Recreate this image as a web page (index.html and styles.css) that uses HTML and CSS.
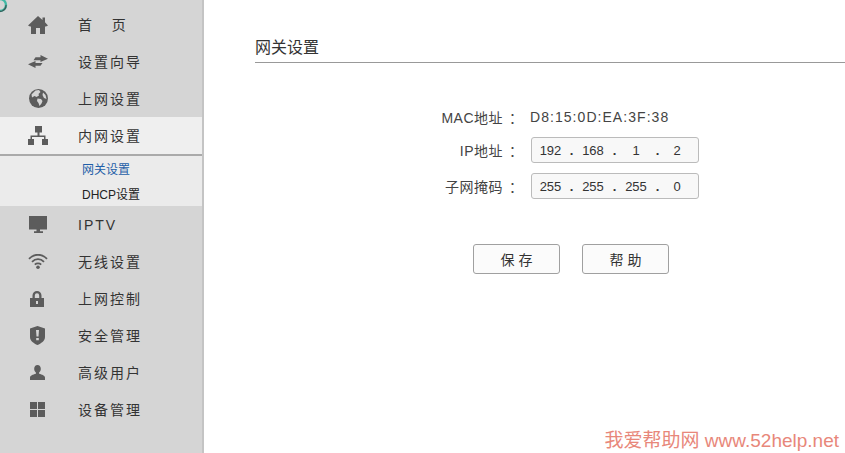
FILE: index.html
```html
<!DOCTYPE html>
<html lang="zh">
<head>
<meta charset="utf-8">
<title>网关设置</title>
<link rel="stylesheet" href="styles.css">
</head>
<body>
<div class="page">
  <nav class="side">
    <svg class="ring" viewBox="0 0 10 16" width="10" height="16"><circle cx="0" cy="5" r="6" fill="none" stroke="#3fb9a4" stroke-width="2.4"/><path d="M-3 10.5A6 6 0 0 0 6 5" fill="none" stroke="#3c5a58" stroke-width="1.2"/></svg>
    <a class="item"><span class="ic"><svg viewBox="0 0 20 18" width="20" height="18"><path fill="#5c5c5c" d="M10 0 14.500 4V1.500H17V6.300L20 9.500 18 10.500H17V18H12V12H8V18H3V10.500H2L0 9.500Z"/></svg></span><span class="lb sp">首&nbsp;&nbsp;&nbsp;页</span></a>
    <a class="item"><span class="ic"><svg viewBox="0 0 20 13" width="20" height="13"><path fill="#5c5c5c" d="M12.500 0 20 3.700 12.500 7V5.200H5.500L7.500 2.200H12.500ZM7.500 6V8H14.500L12.500 10.800H7.500V13L0 9.300Z"/></svg></span><span class="lb">设置向导</span></a>
    <a class="item"><span class="ic"><svg viewBox="0 0 19 19" width="19" height="19"><circle cx="9.500" cy="9.500" r="9.500" fill="#5c5c5c"/><path fill="#d5d5d5" d="M6.500 1.500 10 1 11.500 3 9.500 5 10 6.500 7.500 8 5.500 7 3 8.500 2.500 5.500ZM8.500 9.500l3.500.5 1.500 2-1 2.500-2 2.500-1-3-1.500-2ZM14 3.500l2.500 2.500 1 4-2.500-1-1.500-3Z"/></svg></span><span class="lb">上网设置</span></a>
    <a class="item on"><span class="ic"><svg viewBox="0 0 20 19" width="20" height="19"><path fill="#5c5c5c" d="M7 0h7v6.500h-2.500V9.500H17.500V13H20v6H14v-6h2V11H4v2h2v6H0v-6h2.500V9.500H9.500V6.500H7Z"/></svg></span><span class="lb">内网设置</span></a>
    <div class="sub">
      <a class="sub-item cur">网关设置</a>
      <a class="sub-item">DHCP设置</a>
    </div>
    <a class="item"><span class="ic"><svg viewBox="0 0 18 17" width="18" height="17"><path fill="#5c5c5c" d="M0 0h18v13.500H11v1.800h3V17H5v-1.700h2.500v-1.800H0Z"/></svg></span><span class="lb">IPTV</span></a>
    <a class="item"><span class="ic"><svg viewBox="0 0 20 15" width="20" height="15"><g fill="none" stroke="#5c5c5c" stroke-width="1.800"><path d="M1 4.800C6 -.6 14 -.6 19 4.800"/><path d="M4 7.800C7.500 4.200 12.500 4.200 16 7.800"/><path d="M6.800 10.600C8.500 9 11.500 9 13.200 10.600"/></g><circle cx="10" cy="13.200" r="1.800" fill="#5c5c5c"/></svg></span><span class="lb">无线设置</span></a>
    <a class="item"><span class="ic"><svg viewBox="0 0 16 16" width="16" height="16"><path fill="#5c5c5c" fill-rule="evenodd" d="M2.500 7V4.500a4.500 4.500 0 0 1 9 0V7H14v9H0V7ZM4.800 7h4.400V4.500a2.200 2.200 0 0 0-4.400 0ZM6 10v3h2v-3Z"/></svg></span><span class="lb">上网控制</span></a>
    <a class="item"><span class="ic"><svg viewBox="0 0 16 19" width="16" height="19"><path fill="#5c5c5c" fill-rule="evenodd" d="M7.500 0 15 2.500V11c0 4-4 6.500-7.500 8C4 17.500 0 15 0 11V2.500ZM6 4l.500 6.500h2L9 4ZM6.200 12v2.300h2.600V12Z"/></svg></span><span class="lb">安全管理</span></a>
    <a class="item"><span class="ic"><svg viewBox="0 0 16 15" width="16" height="15"><path fill="#5c5c5c" d="M7.500 0c2 0 3.300 1.600 3.300 3.800 0 1.600-.7 3-1.700 3.800v1.200c3 .8 5.900 1.800 5.900 3.700V15H0v-2.500c0-1.900 2.900-2.900 5.900-3.700V7.600c-1-.8-1.700-2.200-1.700-3.800C4.200 1.600 5.500 0 7.500 0Z"/></svg></span><span class="lb">高级用户</span></a>
    <a class="item"><span class="ic"><svg viewBox="0 0 16 15" width="16" height="15"><path fill="#5c5c5c" d="M0 0h7v7H0ZM8 0h7v7H8ZM0 8h7v7H0ZM8 8h7v7H8Z"/></svg></span><span class="lb">设备管理</span></a>
  </nav>
  <main class="main">
    <h1 class="title">网关设置</h1>
    <div class="form">
      <div class="row">
        <span class="key">MAC地址<span class="colon">：</span></span>
        <span class="val">D8:15:0D:EA:3F:38</span>
      </div>
      <div class="row">
        <span class="key">IP地址<span class="colon">：</span></span>
        <div class="ip"><span>192</span><i>.</i><span>168</span><i>.</i><span>1</span><i>.</i><span>2</span></div>
      </div>
      <div class="row">
        <span class="key">子网掩码<span class="colon">：</span></span>
        <div class="ip"><span>255</span><i>.</i><span>255</span><i>.</i><span>255</span><i>.</i><span>0</span></div>
      </div>
    </div>
    <div class="btns">
      <button class="btn">保 存</button>
      <button class="btn">帮 助</button>
    </div>
  </main>
</div>
<div class="mark">我爱帮助网 www.52help.net</div>
</body>
</html>
```
FILE: styles.css
```css
* { box-sizing: border-box; }
html, body { margin: 0; height: 100%; overflow: hidden; background: #fff; }
body { font-family: "Liberation Sans", "Noto Sans CJK SC", sans-serif; color: #333; position: relative; }
.page { display: flex; height: 453px; }
.side { width: 204px; flex: none; background: #d5d5d5; border-right: 2px solid #c4c4c4; padding-top: 6px; position: relative; }
.ring { position: absolute; left: 0; top: 0; }
.item { display: flex; align-items: center; height: 37px; }
.item.on { background: #efefef; }
.ic { width: 76px; display: flex; justify-content: center; flex: none; }
.lb { margin-left: 2px; font-size: 14px; letter-spacing: 2px; color: #333; line-height: 1; }
.sub { background: #ebebeb; border-top: 2px solid #aaa; height: 52px; padding-top: 2px; display: flex; flex-direction: column; gap: 1px; }
.sub-item { height: 24px; line-height: 25px; padding-left: 82px; font-size: 12px; color: #222; }
.sub-item.cur { color: #1f5fa8; }
.main { flex: 1; padding-left: 51px; min-width: 0; }
.title { margin: 39px 0 0; height: 24px; font-size: 16px; line-height: 18px; font-weight: 400; color: #333; border-bottom: 1px solid #999; }
.form { margin-top: 39px; display: flex; flex-direction: column; }
.row { display: grid; grid-template-columns: 268px 168px; column-gap: 8px; align-items: center; height: 36px; }
.row:first-child { height: 30px; }
.key { text-align: right; font-size: 14px; letter-spacing: .5px; color: #444; }
.colon { display: inline-block; width: 14px; margin-left: 6px; letter-spacing: 0; text-align: left; }
.val { font-size: 14px; letter-spacing: 1.05px; color: #444; margin-left: -1px; }
.ip { height: 26px; width: 168px; border: 1px solid #bbb; border-radius: 3px; background: #f8f8f8; display: grid; grid-template-columns: 33px 9px 34px 9px 34px 9px 30px; align-items: center; font-size: 13px; color: #333; padding-left: 2px; }
.ip span { text-align: center; }
.ip i { font-style: normal; text-align: center; font-weight: 700; }
.btns { display: flex; gap: 22px; margin-top: 40px; margin-left: 218px; }
.btn { width: 87px; height: 30px; padding: 0; border: 1px solid #a0a0a0; border-radius: 3px; background: #fbfbfb; font: 14px "Liberation Sans", "Noto Sans CJK SC", sans-serif; color: #333; }
.mark { position: absolute; right: 6px; bottom: 0; font-size: 19px; line-height: 24px; color: #e8877a; white-space: nowrap; }
```
